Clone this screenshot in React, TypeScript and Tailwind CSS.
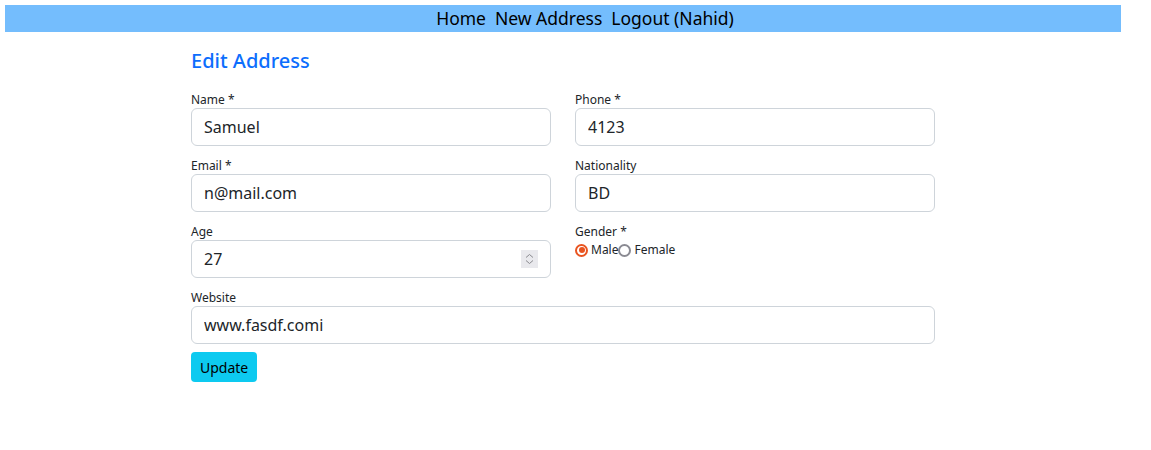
import React from 'react'

const font = { fontFamily: '"Noto Sans", "Open Sans", sans-serif' }

function Field({ label, value, spin = false }: { label: string; value: string; spin?: boolean }) {
  return (
    <div className="flex flex-col">
      <label className="text-[12px] leading-[16px] text-[#212529]">{label}</label>
      <div className="relative">
        <input
          type="text"
          defaultValue={value}
          className="h-[38px] w-full rounded-[6px] border border-[#ced4da] bg-white px-3 text-[16px] text-[#212529] outline-none"
        />
        {spin && (
          <div className="absolute right-[13px] top-[10px] flex h-[18px] w-[17px] items-center justify-center bg-[#e9e9ed]">
            <svg width="9" height="12" viewBox="0 0 9 12" fill="none" stroke="#8a8a8f" strokeWidth="1">
              <path d="M1 4.5 L4.5 1.5 L8 4.5" />
              <path d="M1 7.5 L4.5 10.5 L8 7.5" />
            </svg>
          </div>
        )}
      </div>
    </div>
  )
}

function Radio({ checked }: { checked?: boolean }) {
  return checked ? (
    <span className="mr-[3px] flex h-[13px] w-[13px] items-center justify-center rounded-full border-2 border-[#e95420]">
      <span className="h-[6px] w-[6px] rounded-full bg-[#e95420]" />
    </span>
  ) : (
    <span className="mr-[3px] h-[13px] w-[13px] rounded-full border-2 border-[#8a8a92]" />
  )
}

export default function App() {
  return (
    <div className="min-h-[450px] bg-white pt-[5px]" style={font}>
      {/* Top nav */}
      <nav className="ml-[5px] flex h-[27px] w-[1116px] items-center justify-center gap-[9px] bg-[#74bdfd] pl-[44px] text-[17.5px] text-black">
        <a href="#">Home</a>
        <a href="#">New Address</a>
        <a href="#">Logout (Nahid)</a>
      </nav>

      <div className="ml-[191px] w-[744px]">
        <h5 className="mt-[17px] text-[20px] font-medium leading-[24px] text-[#0d6efd]">Edit Address</h5>

        <div className="mt-[19px] grid grid-cols-2 gap-x-[24px] gap-y-[12px]">
          <Field label="Name *" value="Samuel" />
          <Field label="Phone *" value="4123" />
          <Field label="Email *" value="n@mail.com" />
          <Field label="Nationality" value="BD" />
          <Field label="Age" value="27" spin />
          <div className="flex flex-col">
            <label className="text-[12px] leading-[16px] text-[#212529]">Gender *</label>
            <div className="mt-[1px] flex items-center text-[12px] text-[#212529]">
              <Radio checked />
              <span>Male</span>
              <Radio />
              <span>Female</span>
            </div>
          </div>
          <div className="col-span-2">
            <Field label="Website" value="www.fasdf.comi" />
          </div>
        </div>

        <button className="mt-[8px] h-[30px] rounded-[4px] bg-[#0dcaf0] px-[9px] text-[14px] text-black">Update</button>
      </div>
    </div>
  )
}
